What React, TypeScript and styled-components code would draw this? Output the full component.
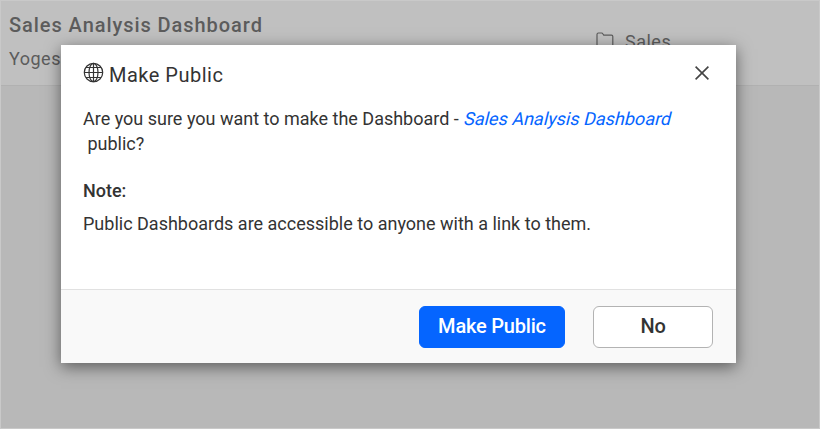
import React from "react";
import styled, { createGlobalStyle } from "styled-components";

const GlobalStyle = createGlobalStyle`
  * { box-sizing: border-box; }
  body { margin: 0; font-family: Roboto, "Liberation Sans", sans-serif; color: #333; }
`;

const Page = styled.div`
  position: relative;
  width: 820px;
  height: 429px;
  overflow: hidden;
  border: 1px solid #c9c9c9;
  background: #b8b8b8;
`;

const DashboardRow = styled.header`
  display: flex;
  height: 85px;
  padding: 10px 8px 0;
  border-bottom: 1px solid #b1b1b1;
  background: #c0c0c0;
  color: #5c5c5c;
`;

const DashboardInfo = styled.div`
  width: 587px;
`;

const DashboardName = styled.h1`
  margin: 0;
  font-size: 20px;
  line-height: 28px;
  font-weight: 500;
  letter-spacing: 0.94px;
`;

const Owner = styled.div`
  margin-top: 6px;
  font-size: 18px;
  line-height: 28px;
  letter-spacing: 0.5px;
`;

const Category = styled.div`
  display: flex;
  gap: 11px;
  padding-top: 17px;
  font-size: 18px;
  line-height: 28px;
  letter-spacing: 0.5px;

  svg { margin-top: 4px; }
`;

const Dialog = styled.section`
  position: absolute;
  top: 44px;
  left: 60px;
  display: flex;
  flex-direction: column;
  width: 675px;
  height: 318px;
  background: #fff;
  box-shadow: 0 4px 15px rgba(0, 0, 0, 0.5);
`;

const DialogHeader = styled.div`
  display: flex;
  align-items: center;
  height: 58px;
  padding: 1px 27px 0 22px;

  > svg { margin-top: -4px; }
`;

const DialogTitle = styled.h2`
  flex: 1;
  margin: 0 0 0 5px;
  font-size: 20px;
  line-height: 28px;
  font-weight: 400;
  letter-spacing: 0.5px;
`;

const CloseButton = styled.button`
  display: flex;
  padding: 0;
  border: 0;
  margin-top: -4px;
  background: none;
  color: #444;
`;

const DialogBody = styled.div`
  flex: 1;
  padding: 3px 22px 0;
  font-size: 18px;
  line-height: 25px;
`;

const Text = styled.p`
  margin: 0;
  white-space: pre;
`;

const DashboardLink = styled.em`
  display: inline-block;
  color: #0565ff;
  font-style: normal;
  transform: skewX(-14deg);
  transform-origin: 0 76%;
`;

const NoteLabel = styled.div`
  margin: 22px 0 8px;
  font-weight: 500;
`;

const DialogFooter = styled.div`
  display: flex;
  justify-content: flex-end;
  gap: 28px;
  height: 74px;
  padding: 16px 23px 0;
  border-top: 1px solid #e1e1e1;
  background: #f9f9f9;
`;

const Button = styled.button<{ $primary?: boolean }>`
  width: ${(p) => (p.$primary ? 146 : 120)}px;
  height: 42px;
  padding: 0 0 2px;
  border: 1px solid ${(p) => (p.$primary ? "#0565ff" : "#b3b3b3")};
  border-radius: 6px;
  background: ${(p) => (p.$primary ? "#0565ff" : "#fff")};
  color: ${(p) => (p.$primary ? "#fff" : "#333")};
  font-family: inherit;
  font-size: 20px;
  font-weight: 500;
  letter-spacing: -0.2px;
`;

const FolderIcon = () => (
  <svg width="18" height="18" viewBox="0 0 18 18" fill="none" stroke="currentColor" strokeWidth="1.2">
    <path d="M1 15.5v-13Q1 1 2.5 1h3Q6.5 1 7 2l.7 1.1h7.8q1.3 0 1.3 1.3v11.1q0 1.3-1.3 1.3H2.3Q1 16.8 1 15.5Z" />
  </svg>
);

const GlobeIcon = () => (
  <svg width="21" height="21" viewBox="0 0 21 21" fill="none" stroke="#333" strokeWidth="1.2">
    <circle cx="10.5" cy="10.5" r="9.2" />
    <ellipse cx="10.5" cy="10.5" rx="4.5" ry="9.2" />
    <path d="M10.5 1.3v18.4M1.3 10.5h18.4M2.8 5.5h15.4M2.8 15.5h15.4" />
  </svg>
);

const CloseIcon = () => (
  <svg width="14" height="14" viewBox="0 0 14 14" fill="none" stroke="currentColor" strokeWidth="1.6">
    <path d="M.6.6l12.8 12.8M13.4.6.6 13.4" />
  </svg>
);

export default function App() {
  return (
    <>
      <GlobalStyle />
      <Page>
        <DashboardRow>
          <DashboardInfo>
            <DashboardName>Sales Analysis Dashboard</DashboardName>
            <Owner>Yoges</Owner>
          </DashboardInfo>
          <Category>
            <FolderIcon />
            Sales
          </Category>
        </DashboardRow>
        <Dialog role="dialog" aria-label="Make Public">
          <DialogHeader>
            <GlobeIcon />
            <DialogTitle>Make Public</DialogTitle>
            <CloseButton aria-label="Close">
              <CloseIcon />
            </CloseButton>
          </DialogHeader>
          <DialogBody>
            <Text>
              Are you sure you want to make the Dashboard - <DashboardLink>Sales Analysis Dashboard</DashboardLink>
              {"\n public?"}
            </Text>
            <NoteLabel>Note:</NoteLabel>
            <Text>Public Dashboards are accessible to anyone with a link to them.</Text>
          </DialogBody>
          <DialogFooter>
            <Button $primary>Make Public</Button>
            <Button>No</Button>
          </DialogFooter>
        </Dialog>
      </Page>
    </>
  );
}
